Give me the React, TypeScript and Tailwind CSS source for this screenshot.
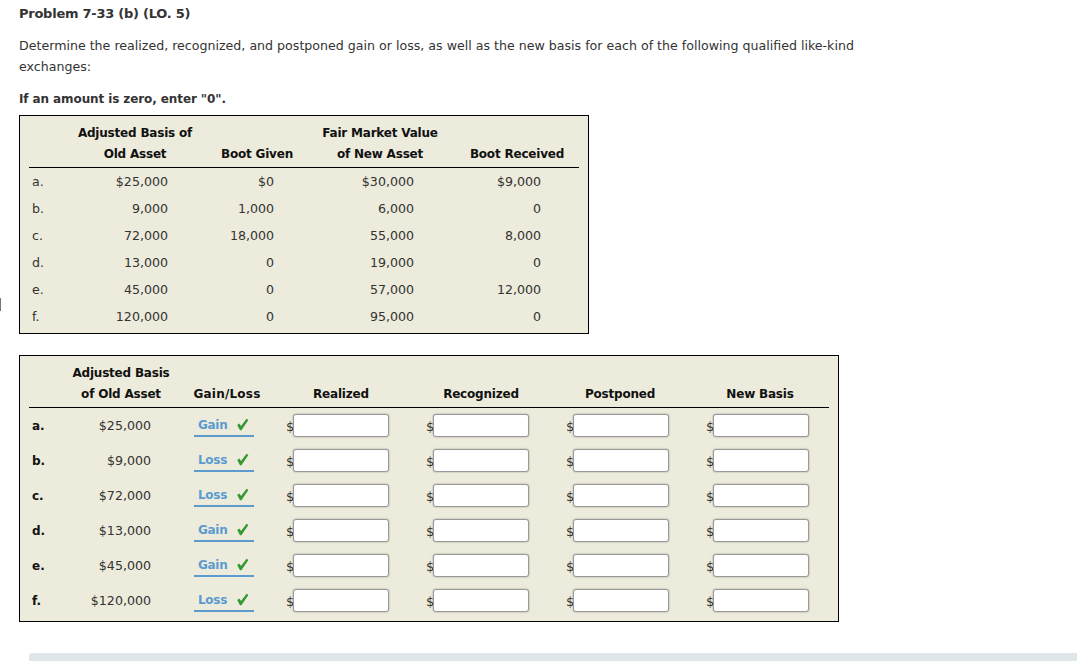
const givens = [
  ['a.', '$25,000', '$0', '$30,000', '$9,000'],
  ['b.', '9,000', '1,000', '6,000', '0'],
  ['c.', '72,000', '18,000', '55,000', '8,000'],
  ['d.', '13,000', '0', '19,000', '0'],
  ['e.', '45,000', '0', '57,000', '12,000'],
  ['f.', '120,000', '0', '95,000', '0'],
];

const answers = [
  ['a.', '$25,000', 'Gain'],
  ['b.', '$9,000', 'Loss'],
  ['c.', '$72,000', 'Loss'],
  ['d.', '$13,000', 'Gain'],
  ['e.', '$45,000', 'Gain'],
  ['f.', '$120,000', 'Loss'],
];

function MoneyInput() {
  return (
    <div className="flex items-center pl-[15px]">
      <span className="w-[7px] mt-[2px] text-[13px] text-[#333]">$</span>
      <input
        type="text"
        className="w-[96px] h-[23px] bg-white rounded-[3px] border border-[#999] shadow-[0_0_2px_rgba(0,0,0,0.35)] outline-none"
      />
    </div>
  );
}

export default function App() {
  return (
    <div className="relative h-[661px] overflow-hidden bg-white pl-[19px] pt-[3px] text-[12.62px] leading-[21px] text-[#333] font-['DejaVu_Sans','Liberation_Sans',sans-serif]">
      {/* stray edge of a control at the left of the page */}
      <div className="absolute left-0 top-[298px] h-[13px] w-[1px] bg-[#777]" />

      <h1 className="font-bold h-[21px] text-[13px] tracking-[-0.25px]">Problem 7-33 (b) (LO. 5)</h1>
      <p className="mt-[11px] w-[850px]">
        Determine the realized, recognized, and postponed gain or loss, as well as the new basis for each of the following qualified like-kind exchanges:
      </p>
      <p className="mt-[12px] font-bold h-[20px] text-[12px] tracking-[-0.1px]">If an amount is zero, enter "0".</p>

      {/* Given data */}
      <div className="mt-[6px] w-[570px] h-[219px] border border-black bg-[#edebdc] px-[9px] pt-[6px]">
        <div className="grid grid-cols-[41px_130px_114px_132px_133px] font-bold text-[12px] tracking-[-0.2px] text-[#111] text-center border-b border-black h-[46px] items-end pb-[2px] whitespace-nowrap">
          <div />
          <div>Adjusted Basis of<br />Old Asset</div>
          <div>Boot Given</div>
          <div>Fair Market Value<br />of New Asset</div>
          <div className="pl-[9px]">Boot Received</div>
        </div>
        {givens.map((row) => (
          <div key={row[0]} className="grid grid-cols-[41px_130px_114px_132px_133px] h-[27px] items-center text-right">
            <div className="text-left pl-[3px]">{row[0]}</div>
            <div className="pr-[32px]">{row[1]}</div>
            <div className="pr-[40px]">{row[2]}</div>
            <div className="pr-[32px]">{row[3]}</div>
            <div className="pr-[38px]">{row[4]}</div>
          </div>
        ))}
      </div>

      {/* Answers */}
      <div className="mt-[21px] w-[820px] h-[267px] border border-black bg-[#edebdc] px-[9px] pt-[6px]">
        <div className="grid grid-cols-[41px_94px_107px_140px_140px_140px_138px] font-bold text-[12px] tracking-[-0.2px] text-[#111] text-center border-b border-black h-[46px] items-end pb-[2px] whitespace-nowrap">
          <div />
          <div className="ml-[2px] -mr-[6px]">Adjusted Basis<br />of Old Asset</div>
          <div className="pl-[19px] tracking-[0.2px]">Gain/Loss</div>
          <div>Realized</div>
          <div>Recognized</div>
          <div className="pr-[2px]">Postponed</div>
          <div>New Basis</div>
        </div>
        {answers.map((row) => (
          <div key={row[0]} className="grid grid-cols-[41px_94px_107px_140px_140px_140px_138px] h-[35px] items-center">
            <div className="pl-[3px] pt-[1px] font-bold text-[12px] text-[#111]">{row[0]}</div>
            <div className="text-right pr-[13px]">{row[1]}</div>
            <div className="pl-[30px]">
              <div className="flex items-center w-[60px] h-[23px] border-b-2 border-[#5b9bcf] pl-[4px]">
                <span className="mt-[2px] font-bold text-[12px] tracking-[-0.3px] text-[#5b9bcf] w-[38px]">{row[2]}</span>
                <svg width="13" height="13" viewBox="0 0 13 13" aria-hidden="true">
                  <path d="M1.2 7 L3.4 5.4 L5 8 L10.6 0.8 L12.4 2 L5.4 12.2 H4 Z" fill="#339933" />
                </svg>
              </div>
            </div>
            <MoneyInput />
            <MoneyInput />
            <MoneyInput />
            <MoneyInput />
          </div>
        ))}
      </div>

      {/* Bottom panel, cut off by the window */}
      <div className="absolute left-[29px] right-0 top-[653px] h-[20px] rounded-tl-[4px] bg-[#dfe6e9]" />
    </div>
  );
}
